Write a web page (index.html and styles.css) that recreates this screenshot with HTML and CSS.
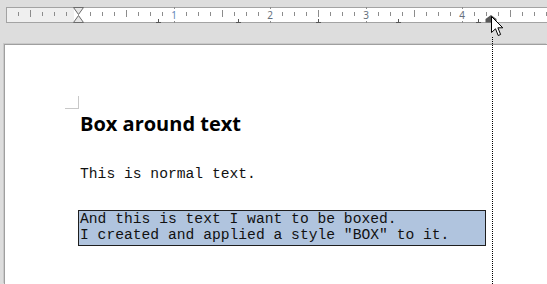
FILE: index.html
```html
<!DOCTYPE html>
<html lang="en">
<head>
    <meta charset="UTF-8">
    <title>Box around text</title>
    <link rel="stylesheet" href="styles.css">
</head>
<body>
    <div class="toolbar">
        <svg class="ruler" width="541" height="16" viewBox="6 7 541 16">
            <rect x="6.5" y="7.5" width="560" height="15" fill="#fff" stroke="#a3a3a3"/>
            <rect x="7" y="8" width="67" height="14" fill="#efefef"/>
            <g id="ticks" stroke="#8c8c8c"></g>
            <g fill="#66707c" font-family="Noto Sans, sans-serif" font-size="10">
                <text x="174" y="19" text-anchor="middle" fill="#5f86b8">1</text>
                <text x="270" y="19" text-anchor="middle">2</text>
                <text x="366" y="19" text-anchor="middle">3</text>
                <text x="462" y="19" text-anchor="middle">4</text>
            </g>
            <g id="tabs" stroke="#555"></g>
            <path d="M73.5 7.5 H83.5 L78.5 14.5 Z M78.5 15.5 L73.5 22.5 H83.5 Z" fill="#e8e8e8" stroke="#6b6b6b"/>
            <path d="M491 15 L496.5 19 V22.5 H485.5 V19 Z" fill="#585858"/>
        </svg>
    </div>

    <div class="page">
        <div class="margin-corner"></div>
        <h1 class="heading">Box around text</h1>
        <p class="normal">This is normal text.</p>
        <p class="boxed">And this is text I want to be boxed.<br>I created and applied a style "BOX" to it.</p>
    </div>

    <div class="indent-guide"></div>
    <svg class="pointer" width="13" height="21" viewBox="0 0 13 21">
        <path d="M0.5 0.5 V16.5 L4.5 12.8 L7.2 19.5 L9.6 18.5 L6.9 11.8 H11.8 Z" fill="#fff" stroke="#000"/>
    </svg>

    <script>
        const ns = 'http://www.w3.org/2000/svg';
        const ticks = document.getElementById('ticks');
        const tabs = document.getElementById('tabs');

        function line(group, x1, y1, x2, y2) {
            const l = document.createElementNS(ns, 'line');
            l.setAttribute('x1', x1);
            l.setAttribute('y1', y1);
            l.setAttribute('x2', x2);
            l.setAttribute('y2', y2);
            group.appendChild(l);
        }

        // margin area, counting back from the zero point
        for (let k = 1; k <= 5; k++) {
            const x = 78 - 12 * k + 0.5;
            if (k === 4) line(ticks, x, 10, x, 17);
            else line(ticks, x, 12, x, 16);
        }

        for (let k = 1; k <= 39; k++) {
            const x = 78 + 12 * k + 0.5;
            if (k % 8 === 0) {
                line(ticks, x, 7, x, 9);
                line(ticks, x, 21, x, 23);
            } else if (k % 4 === 0) {
                line(ticks, x, 10, x, 17);
            } else {
                line(ticks, x, 12, x, 16);
            }
        }

        [158, 238, 318, 398, 478].forEach(x => {
            line(tabs, x + 0.5, 19, x + 0.5, 22);
            line(tabs, x - 2, 22.5, x + 3, 22.5);
        });
    </script>
</body>
</html>
```

FILE: styles.css
```css
html, body {
    margin: 0;
    height: 284px;
    overflow: hidden;
}

body {
    background: #dddddd;
    position: relative;
}

.toolbar {
    height: 44px;
    padding: 7px 0 0 6px;
    box-sizing: border-box;
}

.ruler {
    display: block;
}

.page {
    margin-left: 4px;
    height: 240px;
    background: #fff;
    border-top: 1px solid #9f9f9f;
    border-left: 1px solid #9f9f9f;
    box-shadow: -1px -1px 0 #c9c9c9;
    padding: 65px 0 0 75px;
    box-sizing: border-box;
    position: relative;
}

.margin-corner {
    position: absolute;
    left: 60px;
    top: 51px;
    width: 13px;
    height: 12px;
    border-right: 1px solid #c8c8c8;
    border-bottom: 1px solid #c8c8c8;
}

.heading {
    margin: 0;
    font-family: "Open Sans", sans-serif;
    font-weight: bold;
    font-size: 20px;
    line-height: 28px;
    color: #000;
}

.normal,
.boxed {
    font-family: "Liberation Mono", "Courier New", monospace;
    font-size: 14.67px;
    color: #111;
}

.normal {
    margin: 28px 0 0;
    line-height: 17px;
}

.boxed {
    margin: 27px 0 0 -2px;
    width: 408px;
    box-sizing: border-box;
    padding: 0 0 2px 1px;
    line-height: 16px;
    background: #b0c4de;
    border: 1px solid #1e1e1e;
}

.indent-guide {
    position: absolute;
    left: 492px;
    top: 37px;
    bottom: 0;
    border-left: 1px dotted #000;
}

.pointer {
    position: absolute;
    left: 491px;
    top: 16px;
}
```
